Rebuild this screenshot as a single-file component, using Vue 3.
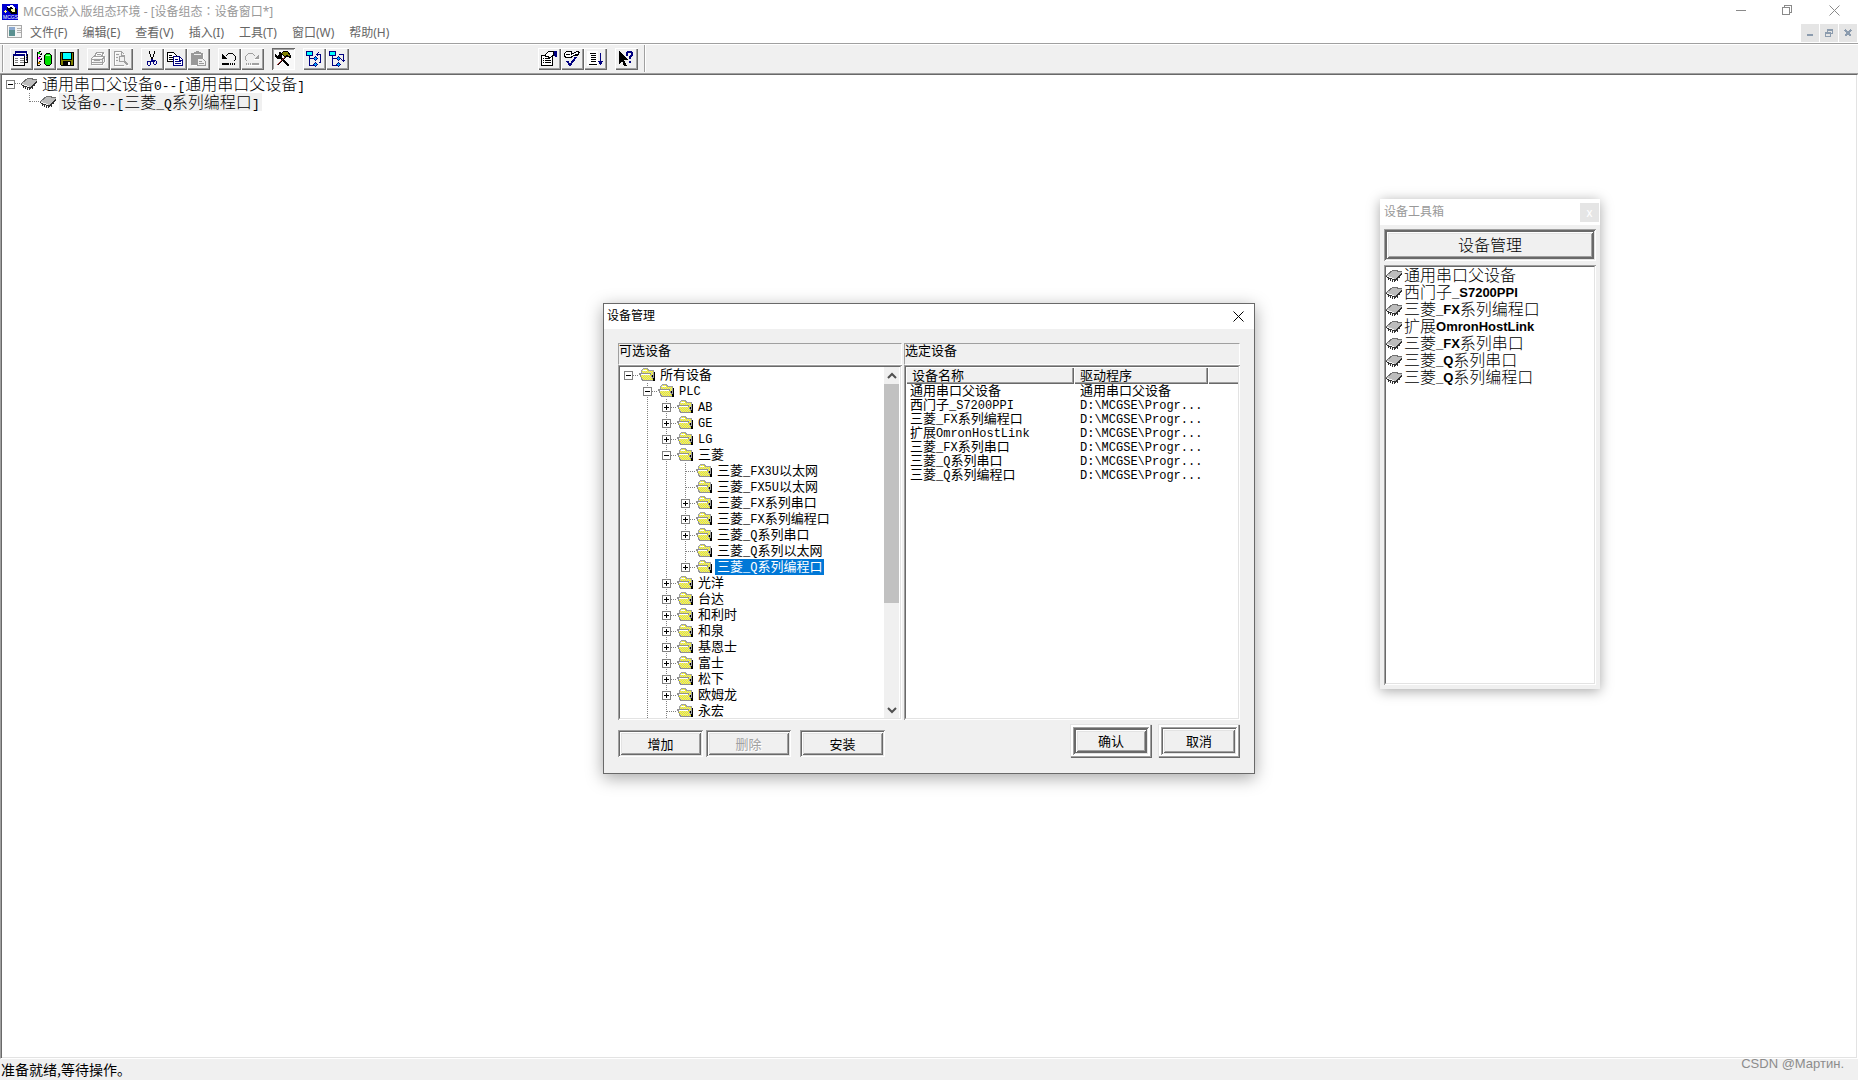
<script setup>
import { h } from 'vue'

// Splits a label into Latin and Chinese runs so that each gets its own face.
const MixedText = ({ text }) =>
  h('span', { class: 'mixed' }, text.match(/[\x20-\x7e]+|[^\x20-\x7e]+/g).map((run) =>
    h('span', { class: /[\x20-\x7e]/.test(run) ? 'latin' : 'han' }, run)))
MixedText.props = ['text']

const menus = ['文件(F)', '编辑(E)', '查看(V)', '插入(I)', '工具(T)', '窗口(W)', '帮助(H)']

const toolGroups = [
  ['windows', 'database', 'save'],
  ['print', 'preview'],
  ['cut', 'copy', 'paste'],
  ['undo', 'redo'],
  ['tools'],
  ['treeUp', 'treeDown']
]
const rightGroups = [['props', 'check', 'sort'], ['help']]

const icons = {
  windows: '<path fill="#fff" d="M3 1h12v10H3z"/><path fill="none" stroke="#000080" d="M2.500 3V.5h11V9"/><path fill="#000080" d="M3 0h11v2H3z"/><path fill="#fff" d="M1 4h11v10H1z"/><path fill="none" stroke="#000" d="M.5 4v10.500h11V5M14.500 3v8.500H12"/><path fill="#000080" d="M0 3h12v2H0z"/><path stroke="#808080" d="M2 7.500h3M7 7.500h4M2 9.500h3M7 9.500h4M2 11.500h3M7 11.500h4M13 5.500h1M13 7.500h1M13 9.500h1"/>',
  database: '<path fill="none" stroke="#000" d="M1.500 1v13M1 14.500h3"/><path fill="#ff00ff" d="M2 6h2v2H2z"/><path fill="#00c000" d="M2 1h2v2H2z"/><path fill="#c08000" d="M2 11h2v2H2z"/><path stroke="#000" d="M3 0.500h2M4 3.500h2M3 5.500h2M4 8.500h2M3 10.500h2M4 13.500h1M5 2.500h1M5 7.500h1"/><path fill="#00e000" stroke="#000" d="M8.500 4.500l2-2h3l2 2v8l-2 2h-3l-2-2z"/><path fill="#a0ffa0" d="M10 4h4v1h-4z"/>',
  save: '<path fill="#808000" stroke="#000" d="M1.500 1.500h13v13h-12l-1-1z"/><path fill="#00ffff" d="M4 2h8v6H4z"/><path fill="#000" d="M4 10h8v4H4z"/><path fill="#fff" d="M9 11h2v3H9z"/><path fill="none" stroke="#000" d="M3.500 2v6.500h9V2"/>',
  print: '<path fill="none" stroke="#fff" d="M5.500 6l2-4h7l-2 4M2.500 8.500l2-2h11v5l-3 3h-10z"/><path fill="none" stroke="#a0a0a0" d="M4.500 5.500l2-4h7l-2 4M1.500 7.500l2-2h11v5l-3 3h-10zM2 8.500h10l2-2M2 11.500h10v2M12.500 9v4M7 3.500h4M4 9.500h6"/>',
  preview: '<path fill="none" stroke="#fff" d="M2.500 1.500h7l3 3M2.500 2v13h9M12 12l4 3"/><path fill="none" stroke="#a0a0a0" d="M1.500 14.500V.5h7l3 3M8.500 1v3h3M1 14.500h10M3 3.500h3M3 6.500h2M3 9.500h2"/><circle cx="9" cy="8" r="3" fill="none" stroke="#a0a0a0"/><path stroke="#a0a0a0" stroke-width="2" d="M11 10l4 4"/>',
  cut: '<path stroke="#000" d="M5.500 0v3M6.500 3v3M10.500 0v3M9.500 3v3M8.500 6v2M7.500 6v2"/><g fill="none" stroke="#000080"><path d="M7.500 8v2l-2 1M8.500 8v2l2 1"/><path d="M3.500 10.500h2l1 1v2l-1 1h-1l-1-1zM9.500 9.500h2l1 1v2l-1 1h-1l-1-1z"/></g>',
  copy: '<path fill="#fff" stroke="#000" d="M.5 1.500h6l3 3v6h-9z"/><path stroke="#000" d="M2 4.500h3M2 6.500h4M2 8.500h4"/><path fill="#fff" stroke="#000080" d="M6.500 5.500h6l3 3v6h-9z"/><path fill="none" stroke="#000080" d="M12.500 6v3h3M8 8.500h3M8 10.500h6M8 12.500h6"/>',
  paste: '<path fill="#fff" d="M2 3h12v12H2z"/><path fill="#999" d="M1 2h3V1h2V0h3v1h2v1h2v5H8v7H1z"/><path stroke="#f0f0f0" d="M4 3.500h7"/><path fill="#f0f0f0" stroke="#999" d="M7.500 7.500h5l3 3v4h-8z"/><path stroke="#999" d="M9 10.500h3M9 12.500h5"/>',
  undo: '<path fill="none" stroke="#000" d="M4.500 5.500l2-2 1-1h4l3 3v3l-2 2"/><path fill="#000" d="M1 3l5 5H1z"/><path stroke="#000" stroke-width="2" d="M1 13h7M9 13h1M11 13h1M13 13h1"/>',
  redo: '<path fill="none" stroke="#a0a0a0" d="M11.500 5.500l-2-2-1-1h-4l-3 3v3l2 2"/><path fill="#a0a0a0" d="M15 3l-5 5h5z"/><path stroke="#fff" d="M3 14.500h13M10 8.500h6"/><path stroke="#a0a0a0" stroke-width="2" d="M8 13h7M6 13h1M4 13h1M2 13h1"/>',
  tools: '<path stroke="#000" stroke-width="2" d="M5 6l9 9"/><path fill="#000" d="M0 3l2 2 2-1V2L3 1h2l2 2v3L5 8H2L0 6z"/><path stroke="#a03030" d="M9.500 6.500l-8 8"/><path stroke="#000" d="M10.500 6.500l-8 8"/><path fill="#808000" stroke="#000" d="M6.500 2.500l2-2h4l3 4v2l-2-1-2-1-1 2z"/>',
  treeUp: '<path fill="#00ffff" stroke="#000080" d="M.5.500h6v4h-6z"/><path fill="none" stroke="#000080" d="M3.500 5v9.500H8M3.500 7.500H8"/><path fill="#00a0ff" stroke="#000080" d="M7.500 7.500l2-2 2 2-2 2zM7.500 13.500l2-2 2 2-2 2z"/><path fill="none" stroke="#000080" d="M13.500 12l1-1V3.500H11M12.500 1.500l-2 2 2 2"/>',
  treeDown: '<path fill="#00ffff" stroke="#000080" d="M.5.500h6v4h-6z"/><path fill="none" stroke="#000080" d="M3.500 5v9.500H8M3.500 7.500H8M10 3.500h4.500V10M12.500 8.500l2 2 2-2"/><path fill="#00a0ff" stroke="#000080" d="M7.500 7.500l2-2 2 2-2 2zM7.500 13.500l2-2 2 2-2 2z"/>',
  props: '<path fill="#fff" stroke="#000" d="M.5 4.500h11v10H.5z"/><path stroke="#000" d="M2 7.500h1M4 7.500h5M2 9.500h1M4 9.500h6M2 11.500h1M4 11.500h6"/><path fill="#fff" stroke="#000" d="M4.500 3.500l3-3h5v4l-2 1-2 2-1-2-3 0z"/><path fill="#000080" d="M13 0h3v6h-2l-1-2z"/>',
  check: '<path fill="#fff" stroke="#000" d="M.5 2.500l2-2h5v3l3-2 3-1 2 1-2 3h-4l-2 2h-6l-1-2z"/><path stroke="#000" d="M2 3.500h4M7 5.500h2M11 3.500h3"/><path fill="none" stroke="#000080" stroke-width="2" d="M3 10l3 4 6-8"/>',
  sort: '<path fill="#fff" d="M0 0h11v15H0z"/><path stroke="#000" d="M3 2.500h6M4 4.500h5M4 6.500h5M4 8.500h5M4 10.500h5M2 13.500h8"/><path fill="none" stroke="#000080" d="M13.500 2v10"/><path fill="#000080" d="M11 10h5l-2 4h-1z"/>',
  help: '<path fill="#000" d="M1 0v13l3-3 2 5h3L6 9h4z"/><path fill="none" stroke="#000080" stroke-width="2" d="M9 5V2l1-1h3l1 1v2l-2 2v2M11 11h2"/>'
}

// kind: root | tee | last   sign: + | - | ''   guides: which outer columns carry a line
const projectTree = [
  { text: '通用串口父设备0--[通用串口父设备]', kind: 'root', sign: '-', guides: [] },
  { text: '设备0--[三菱_Q系列编程口]', kind: 'last', sign: '', guides: [0], dim: true }
]

const plc = (text, sign = '+') => ({ text, sign, kind: 'tee', guides: [0, 1] })
const model = (text, sign = '+', kind = 'tee') => ({ text, sign, kind, guides: [0, 1, 1] })
const deviceTree = [
  { text: '所有设备', kind: 'root', sign: '-', guides: [] },
  { text: 'PLC', kind: 'tee', sign: '-', guides: [0] },
  plc('AB'), plc('GE'), plc('LG'), plc('三菱', '-'),
  model('三菱_FX3U以太网', ''), model('三菱_FX5U以太网', ''),
  model('三菱_FX系列串口'), model('三菱_FX系列编程口'),
  model('三菱_Q系列串口'), model('三菱_Q系列以太网', ''),
  { ...model('三菱_Q系列编程口', '+', 'last'), selected: true },
  plc('光洋'), plc('台达'), plc('和利时'), plc('和泉'), plc('基恩士'),
  plc('富士'), plc('松下'), plc('欧姆龙'), plc('永宏', '')
]

const driver = 'D:\\MCGSE\\Progr...'
const names = ['通用串口父设备', '西门子_S7200PPI', '三菱_FX系列编程口', '扩展OmronHostLink',
  '三菱_FX系列串口', '三菱_Q系列串口', '三菱_Q系列编程口']
const chosen = names.map((name, i) => ({ name, driver: i ? driver : name }))
</script>

<template>
  <div class="app">
    <svg class="defs" width="0" height="0" aria-hidden="true">
      <defs>
        <pattern id="dither" width="2" height="2" patternUnits="userSpaceOnUse">
          <path fill="#ffff00" d="M0 0h2v2H0z" /><path fill="#d0d0b8" d="M0 0h1v1H0zM1 1h1v1H1z" />
        </pattern>
      </defs>
      <symbol id="chip" viewBox="0 0 16 16">
        <path fill="#303030" d="M0 8l9 3 7-7v2l-7 7-9-4z" />
        <path stroke="#303030" d="M2.500 10v2M4.500 11v2M6.500 12v2M8.500 12v2M11.500 10v3M13.500 8v2" />
        <path fill="#bcbcbc" d="M0 8l7-6 9 2-7 7z" />
        <path fill="none" stroke="#707070" d="M0 8l7-6 9 2" />
        <path fill="none" stroke="#f4f4f4" d="M1 8.500l7 2" />
      </symbol>
      <symbol id="folder" viewBox="0 0 16 16">
        <path fill="#000" d="M4 14h12V5h-1v8H4z" />
        <path fill="url(#dither)" stroke="#a0a0a0" d="M2.500 12.500v-9l2-2h4l1 2h5v9z" />
        <path fill="url(#dither)" stroke="#909090" d="M.5 6.500h11l3 6.500H3.500z" />
        <path stroke="#fff" d="M2 7.500h9M4 3.500h4" />
        <path stroke="#000" d="M13.500 8v2M14.500 11v3" />
      </symbol>
    </svg>

    <header class="titlebar">
      <svg class="logo" width="16" height="16" viewBox="0 0 16 16" aria-hidden="true">
        <path fill="#0000d0" d="M0 0h16v16H0z" />
        <path fill="#000" d="M6 2h6l3 4v4H9L5 5z" />
        <path fill="#fff" d="M5 2l5-1 4 3-2 1-3-2-3 1z" /><path fill="#ffffa0" d="M9 5h4v3h-3z" />
        <path stroke="#ffff80" d="M2 7.500h3M3.500 6v3" />
        <text x="1" y="15" font-size="5" fill="#fff" font-family="Liberation Sans, sans-serif">MCGS</text>
      </svg>
      <h1>MCGS嵌入版组态环境 - [设备组态<span class="colon">：</span>设备窗口*]</h1>
      <div class="winbtns">
        <button type="button" aria-label="最小化"><svg width="11" height="11"><path d="M0 5.500h10" /></svg></button>
        <button type="button" aria-label="还原"><svg width="11" height="11"><path d="M.5 2.500h7v7h-7zM2.500 2.500v-2h7v7h-2" /></svg></button>
        <button type="button" aria-label="关闭"><svg width="11" height="11" class="soft"><path d="M.5.500l10 10M10.500.500l-10 10" /></svg></button>
      </div>
    </header>

    <nav class="menubar">
      <svg class="docicon" width="16" height="14" viewBox="0 0 16 14" aria-hidden="true">
        <path fill="#f4f4f4" stroke="#a8a8a8" d="M.5.500h14v12H.5z" />
        <path fill="#5a9090" d="M2 2h6v9H2z" /><path fill="#8aa8d0" d="M2 2h6v3H2z" />
        <path stroke="#b0b0b0" d="M10 3.500h4M10 5.500h4M10 7.500h4" />
      </svg>
      <button v-for="m in menus" :key="m" type="button" class="menu">{{ m }}</button>
      <div class="mdi">
        <button type="button" aria-label="最小化子窗口"><svg width="8" height="8"><path stroke-width="2" d="M1 6h6" /></svg></button>
        <button type="button" aria-label="还原子窗口"><svg width="8" height="8"><path d="M0 3.500h5v4H.5v-4M2.500 3V.5h5v4H6M0 4.500h5M2 1.500h6" /></svg></button>
        <button type="button" aria-label="关闭子窗口"><svg width="8" height="8"><path stroke-width="2" d="M1 1l6 6M7 1l-6 6" /></svg></button>
      </div>
    </nav>

    <div class="toolbar">
      <div class="band main">
        <div v-for="(g, i) in toolGroups" :key="i" class="group">
          <button v-for="n in g" :key="n" type="button" class="tool" :class="{ pressed: n === 'tools' }" :aria-label="n">
            <svg width="16" height="16" viewBox="0 0 16 16" v-html="icons[n]" />
          </button>
        </div>
      </div>
      <div class="band extra">
        <div v-for="(g, i) in rightGroups" :key="i" class="group">
          <button v-for="n in g" :key="n" type="button" class="tool" :aria-label="n">
            <svg width="16" height="16" viewBox="0 0 16 16" v-html="icons[n]" />
          </button>
        </div>
      </div>
    </div>

    <main class="workspace">
      <ul class="tree large">
        <li v-for="r in projectTree" :key="r.text">
          <i v-for="(g, i) in r.guides" :key="i" class="cell"></i>
          <i class="cell" :class="r.kind"><b v-if="r.sign" class="box" :class="{ plus: r.sign === '+' }"></b></i>
          <svg width="16" height="16"><use href="#chip" /></svg>
          <span class="label" :class="{ dim: r.dim }"><MixedText :text="r.text" /></span>
        </li>
      </ul>
    </main>

    <footer class="status">
      <span>准备就绪,等待操作。</span>
      <span class="mark">CSDN @Мартин.</span>
    </footer>

    <section class="toolbox" aria-label="设备工具箱">
      <header><h2>设备工具箱</h2><button type="button" aria-label="关闭工具箱">x</button></header>
      <button type="button" class="push default manage">设备管理</button>
      <ul class="sunken devices">
        <li v-for="n in names" :key="n"><svg width="16" height="16"><use href="#chip" /></svg><MixedText :text="n" /></li>
      </ul>
    </section>

    <section class="dialog" role="dialog" aria-label="设备管理">
      <header>
        <h2>设备管理</h2>
        <button type="button" aria-label="关闭"><svg width="11" height="11"><path d="M.5.500l10 10M10.500.500l-10 10" /></svg></button>
      </header>
      <div class="panes">
        <div class="pane left">
          <div class="caption">可选设备</div>
          <div class="sunken body">
            <ul class="tree">
              <li v-for="r in deviceTree" :key="r.text">
                <i v-for="(g, i) in r.guides" :key="i" class="cell" :class="{ line: g }"></i>
                <i class="cell" :class="r.kind"><b v-if="r.sign" class="box" :class="{ plus: r.sign === '+' }"></b></i>
                <svg width="16" height="16"><use href="#folder" /></svg>
                <span class="label" :class="{ selected: r.selected }"><MixedText :text="r.text" /></span>
              </li>
            </ul>
            <div class="scroll">
              <svg width="15" height="17"><path d="M4 11l4-4 4 4" /></svg>
              <div class="thumb"></div>
              <svg class="down" width="15" height="17"><path d="M4 7l4 4 4-4" /></svg>
            </div>
          </div>
        </div>
        <div class="pane right">
          <div class="caption">选定设备</div>
          <div class="sunken body">
            <table>
              <colgroup><col class="c1"><col class="c2"><col></colgroup>
              <thead><tr><th>设备名称</th><th>驱动程序</th><th></th></tr></thead>
              <tbody>
                <tr v-for="c in chosen" :key="c.name">
                  <td><MixedText :text="c.name" /></td><td><MixedText :text="c.driver" /></td><td></td>
                </tr>
              </tbody>
            </table>
          </div>
        </div>
      </div>
      <div class="actions">
        <button type="button" class="push">增加</button>
        <button type="button" class="push" disabled>删除</button>
        <button type="button" class="push install">安装</button>
        <span class="frame ok"><button type="button" class="push default">确认</button></span>
        <span class="frame"><button type="button" class="push">取消</button></span>
      </div>
    </section>
  </div>
</template>

<style>
html, body { margin: 0; background: #fff; }
.mixed { white-space: pre; }
.mixed .latin { font-family: "Liberation Mono", monospace; font-size: 12px; line-height: 1px; }
.large .mixed .latin { font-size: 13px; }
.devices .mixed .latin { font: bold 13px/1px "Liberation Sans", sans-serif; vertical-align: 1px; }
</style>

<style scoped>
.app {
  position: relative;
  display: flex;
  flex-direction: column;
  height: 100vh;
  overflow: hidden;
  background: #f0f0f0;
  color: #000;
  font: 400 13px/16px "Noto Sans CJK SC", sans-serif;
}
.defs { position: absolute; }
button { margin: 0; padding: 0; border: 0; background: none; font: inherit; color: inherit; }
h1, h2 { margin: 0; padding-bottom: 2px; font-size: 12px; font-weight: 400; line-height: 16px; }
ul { list-style: none; margin: 0; padding: 0; }
svg { flex: none; shape-rendering: crispEdges; }

.titlebar { display: flex; align-items: center; height: 23px; padding-left: 2px; background: #fff; color: #999; }
.titlebar h1 { margin-left: 5px; padding: 0; font-family: "Noto Sans", "Noto Sans CJK SC", sans-serif; }
.colon { font-family: "Noto Sans CJK TC", sans-serif; }
.winbtns { display: flex; margin-left: auto; margin-bottom: 2px; }
.winbtns button { display: flex; justify-content: center; width: 46px; }
.winbtns button:last-child { width: 48px; }
.winbtns path { fill: none; stroke: #8a8a8a; }
.soft { shape-rendering: auto; }

.menubar { display: flex; align-items: flex-start; height: 20px; padding-left: 7px; background: #fff; color: #666; font: 12px/20px "Noto Sans", "Noto Sans CJK SC", sans-serif; }
.menu { margin-right: 15px; }
.docicon { margin: 2px 7px 0 0; }
.mdi { display: flex; gap: 1px; margin-left: auto; padding: 1px 1px 0 0; }
.mdi button { display: flex; align-items: center; justify-content: center; width: 18px; height: 18px; background: #e5e5e5; }
.mdi path { fill: none; stroke: #8c9cae; }

.toolbar { display: flex; align-items: center; height: 29px; border-top: 1px solid #a0a0a0; border-bottom: 1px solid #a0a0a0; box-shadow: inset 0 1px #fff; padding-left: 2px; }
.band { display: flex; gap: 8px; height: 27px; align-items: center; border-left: 1px solid #a0a0a0; box-shadow: inset 1px 0 #fff; padding-left: 7px; }
.main { width: 527px; }
.extra { border-left: 0; border-right: 1px solid #a0a0a0; box-shadow: 1px 0 #fff; padding: 0 6px 0 1px; }
.group { display: flex; }
.tool { box-sizing: border-box; display: flex; align-items: center; justify-content: center; width: 23px; height: 22px; padding-right: 1px; box-shadow: inset 1px 1px #fff, inset -1px -1px #696969, inset -2px -2px #a0a0a0; }
.pressed { background: #f8f8f8; box-shadow: inset 1px 1px #696969, inset -1px -1px #fff, inset 2px 2px #a0a0a0; }

.workspace { flex: 1; background: #fff; border: 1px solid; border-color: #696969 #fff #fff #a0a0a0; box-shadow: inset 1px 0 #696969, inset -1px -1px #e3e3e3; padding-left: 1px; }
.status { display: flex; justify-content: space-between; align-items: center; height: 21px; padding: 0 14px 0 1px; font-size: 14px; }
.status span:first-child { padding-bottom: 2px; }
.mark { color: #8c8c8c; font: 13px "Liberation Sans", sans-serif; padding-bottom: 12px; }

.tree { flex: 1; overflow: hidden; }
.tree li { display: flex; align-items: center; height: 16px; }
.tree.large { overflow: visible; font-size: 16px; font-weight: 300; }
.tree.large li { height: 18px; }
.tree li > svg { margin-right: 3px; }
.label { padding: 0 2px; line-height: 14px; height: 16px; }
.large .label { height: 18px; line-height: 16px; }
.dim { background: #f0f0f0; }
.selected { background: #0078d7; color: #fff; }
.cell { position: relative; flex: none; width: 19px; height: 100%; --v: repeating-linear-gradient(#808080 0 1px, transparent 1px 2px); --h: repeating-linear-gradient(90deg, #808080 0 1px, transparent 1px 2px); background-repeat: no-repeat; }
.line { background-image: var(--v); background-size: 1px 100%; background-position: 8px 0; }
.root { background-image: var(--h); background-size: 10px 1px; background-position: 9px 8px; }
.tee { background-image: var(--v), var(--h); background-size: 1px 100%, 10px 1px; background-position: 8px 0, 9px 8px; }
.last { background-image: var(--v), var(--h); background-size: 1px 9px, 10px 1px; background-position: 8px 0, 9px 8px; }
.box { position: absolute; left: 4px; top: calc(50% - 4px); box-sizing: border-box; width: 9px; height: 9px; border: 1px solid #808080; background: linear-gradient(#000, #000) center / 5px 1px no-repeat #fff; }
.plus { background: linear-gradient(#000, #000) center / 5px 1px no-repeat, linear-gradient(#000, #000) center / 1px 5px no-repeat, #fff; }

.sunken { box-sizing: border-box; background: #fff; border: 2px solid; border-color: #696969 #e3e3e3 #e3e3e3 #696969; position: relative; }
.sunken::after { content: ""; position: absolute; inset: -2px; pointer-events: none; box-shadow: inset 1px 1px #a0a0a0, inset -1px -1px #fff; }

.push { box-sizing: border-box; width: 85px; height: 27px; background: #f0f0f0; box-shadow: inset 1px 1px #a0a0a0, inset -1px -1px #fff, inset 2px 2px #696969, inset -2px -2px #e3e3e3, inset 3px 3px #fff, inset -3px -3px #696969, inset 4px 4px #e3e3e3, inset -4px -4px #a0a0a0; }
.push.default { box-shadow: inset 1px 1px #a0a0a0, inset -1px -1px #fff, inset 2px 2px #696969, inset -2px -2px #e3e3e3, inset 0 0 0 3px #696969, inset 4px 4px #fff, inset -4px -4px #696969, inset 5px 5px #e3e3e3, inset -5px -5px #a0a0a0; }
.push:disabled { color: #a0a0a0; text-shadow: 1px 1px #fff; }

.toolbox { position: absolute; top: 199px; right: 258px; width: 220px; height: 490px; background: #f0f0f0; box-shadow: 0 2px 12px rgba(0, 0, 0, .35); }
.toolbox header { display: flex; align-items: center; justify-content: space-between; height: 26px; padding: 0 1px 0 4px; background: #fff; color: #999; }
.toolbox header button { width: 19px; height: 19px; background: #e5e5e5; color: #fff; font-size: 12px; line-height: 16px; }
.manage { display: block; width: 212px; height: 32px; margin: 4px 0 4px 4px; padding-bottom: 3px; font-size: 16px; font-weight: 300; }
.devices { width: 212px; height: 420px; margin-left: 4px; font-size: 16px; font-weight: 300; line-height: 15px; }
.devices li { display: flex; align-items: center; gap: 2px; height: 17px; }
.devices .mixed { padding-bottom: 2px; }

.dialog { position: absolute; left: calc(50% - 326px); top: 303px; box-sizing: border-box; width: 652px; height: 471px; border: 1px solid #696969; background: #f0f0f0; box-shadow: 0 4px 16px rgba(0, 0, 0, .35); }
.dialog header { display: flex; align-items: center; justify-content: space-between; height: 25px; padding: 0 10px 0 3px; background: #fff; }
.dialog h2 { padding-bottom: 3px; }
.dialog header button { display: flex; }
.dialog header path { stroke: #000; }
.dialog header svg { shape-rendering: auto; }
.panes { display: flex; gap: 2px; padding: 14px 14px 0; }
.left { width: 284px; }
.right { flex: 1; }
.caption { box-sizing: border-box; height: 22px; border: 1px solid; border-color: #a0a0a0 #fff #fff #a0a0a0; line-height: 11px; }
.body { display: flex; height: 355px; }
.scroll { display: flex; flex-direction: column; width: 15px; margin-right: 1px; background: #f0f0f0; }
.scroll path { fill: none; stroke: #505050; stroke-width: 2; }
.scroll svg { shape-rendering: auto; }
.thumb { height: 219px; background: #c1c1c1; }
.down { margin-top: auto; }
table { width: 100%; height: max-content; table-layout: fixed; border-collapse: collapse; line-height: 14px; }
.c1 { width: 168px; }
.c2 { width: 134px; }
th { height: 14px; padding: 0 0 3px 6px; line-height: 13px; text-align: left; font-weight: inherit; background: #f0f0f0; box-shadow: inset 1px 1px #fff, inset -1px -1px #696969, inset -2px -2px #a0a0a0; }
th:last-child { box-shadow: inset 1px 1px #fff, inset 0 -1px #696969, inset 0 -2px #a0a0a0; }
td { height: 14px; padding: 0 0 0 4px; line-height: 12px; vertical-align: top; }
td + td { padding-left: 6px; }
.actions { display: flex; align-items: flex-end; gap: 3px; padding: 4px 14px 0; }
.actions > .push { margin-bottom: 1px; }
.actions > .install { margin-left: 6px; }
.frame { display: flex; padding: 3px; margin-left: 3px; background: #fff; box-shadow: inset 1px 1px #e3e3e3, inset -1px -1px #696969, inset -2px -2px #a0a0a0; }
.frame .push { width: 76px; height: 28px; }
.actions .ok { margin-left: auto; }
</style>
